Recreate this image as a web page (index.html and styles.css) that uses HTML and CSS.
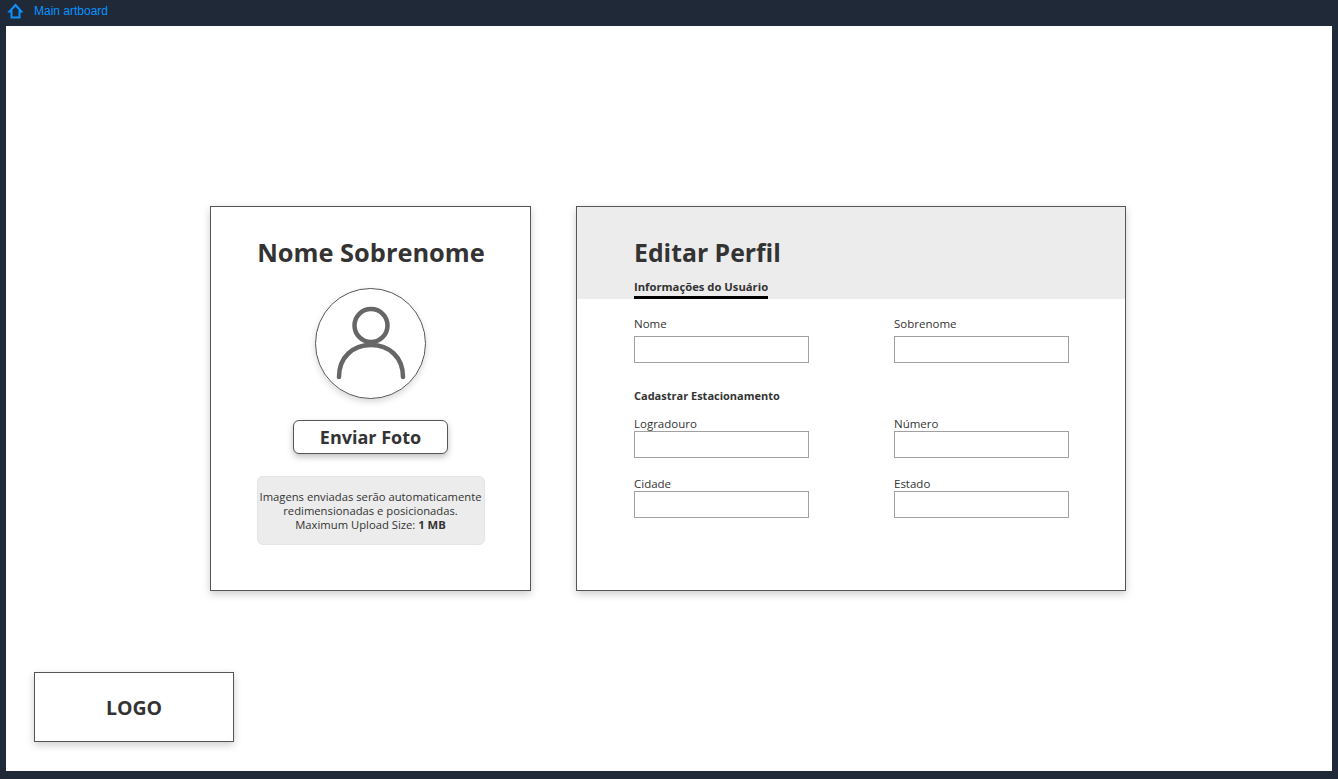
FILE: index.html
```html
<!DOCTYPE html>
<html lang="en">
<head>
    <meta charset="UTF-8">
    <meta name="viewport" content="width=device-width, initial-scale=1.0">
    <title>Main artboard</title>
    <link rel="stylesheet" href="styles.css">
</head>
<body>
    <div class="topbar">
        <svg class="home-icon" width="16" height="16" viewBox="0 0 16 16">
            <path d="M8.5 2 L14.5 8.5 H12.5 V14.5 H4.5 V8.5 H2.5 Z" fill="none" stroke="#0a93ff" stroke-width="2" stroke-linejoin="miter"/>
        </svg>
        <span class="topbar-title">Main artboard</span>
    </div>

    <div class="artboard">
        <div class="cards">
            <div class="card profile-card">
                <div class="profile-name">Nome Sobrenome</div>
                <div class="avatar">
                    <svg width="110" height="110" viewBox="0 0 110 110">
                        <circle cx="55" cy="36.5" r="16.5" fill="none" stroke="#666" stroke-width="4.5"/>
                        <path d="M23 88 C23 68 37 56 55 56 C73 56 87 68 87 88" fill="none" stroke="#666" stroke-width="4.5" stroke-linecap="round"/>
                    </svg>
                </div>
                <button class="upload-btn">Enviar Foto</button>
                <div class="upload-note">
                    Imagens enviadas serão automaticamente redimensionadas e posicionadas.<br>
                    Maximum Upload Size: <b>1 MB</b>
                </div>
            </div>

            <div class="card form-card">
                <div class="form-header">
                    <div class="form-title">Editar Perfil</div>
                    <div class="form-tab">Informações do Usuário</div>
                </div>
                <div class="form-body">
                    <div class="form-row">
                        <div class="field field-spaced">
                            <label for="nome">Nome</label>
                            <input type="text" id="nome">
                        </div>
                        <div class="field field-spaced">
                            <label for="sobrenome">Sobrenome</label>
                            <input type="text" id="sobrenome">
                        </div>
                    </div>
                    <div class="section-title">Cadastrar Estacionamento</div>
                    <div class="form-row">
                        <div class="field">
                            <label for="logradouro">Logradouro</label>
                            <input type="text" id="logradouro">
                        </div>
                        <div class="field">
                            <label for="numero">Número</label>
                            <input type="text" id="numero">
                        </div>
                    </div>
                    <div class="form-row">
                        <div class="field">
                            <label for="cidade">Cidade</label>
                            <input type="text" id="cidade">
                        </div>
                        <div class="field">
                            <label for="estado">Estado</label>
                            <input type="text" id="estado">
                        </div>
                    </div>
                </div>
            </div>
        </div>

        <div class="card logo-box">LOGO</div>
    </div>
</body>
</html>
```

FILE: styles.css
```css
* {
    box-sizing: border-box;
}

body {
    margin: 0;
    height: 779px;
    overflow: hidden;
    display: flex;
    flex-direction: column;
    padding: 0 6px 8px;
    background-color: #1f2937;
    font-family: "Open Sans", "Noto Sans", Arial, sans-serif;
    color: #333;
}

.topbar {
    height: 26px;
    flex-shrink: 0;
    display: flex;
    align-items: center;
    padding-bottom: 4px;
    padding-left: 1px;
}

.home-icon {
    display: block;
}

.topbar-title {
    margin-left: 11px;
    font-family: "Liberation Sans", Arial, sans-serif;
    font-size: 12px;
    color: #0a93ff;
}

.artboard {
    flex: 1;
    background-color: #fff;
    padding: 180px 0 0 28px;
}

.cards {
    display: flex;
    gap: 45px;
    margin-left: 176px;
    height: 385px;
}

.card {
    background-color: #fff;
    border: 1px solid #555;
    box-shadow: 0 3px 8px rgba(0, 0, 0, 0.2);
}

.profile-card {
    width: 321px;
    display: flex;
    flex-direction: column;
    align-items: center;
    padding-top: 26px;
}

.profile-name {
    padding-left: 1px;
    font-size: 25.4px;
    line-height: 38px;
    font-weight: 700;
    white-space: nowrap;
}

.avatar {
    width: 111px;
    height: 111px;
    margin-top: 17px;
    border: 1px solid #555;
    border-radius: 50%;
    box-shadow: 0 3px 6px rgba(0, 0, 0, 0.15);
}

.avatar svg {
    display: block;
}

.upload-btn {
    width: 155px;
    height: 34px;
    margin-top: 21px;
    padding: 0;
    background-color: #fff;
    border: 1px solid #555;
    border-radius: 6px;
    box-shadow: 0 3px 6px rgba(0, 0, 0, 0.25);
    font-family: inherit;
    font-size: 18px;
    font-weight: 700;
    color: #333;
}

.upload-note {
    width: 228px;
    height: 69px;
    margin-top: 22px;
    padding: 13px 0 0;
    background-color: #ececec;
    border: 1px solid #e4e4e4;
    border-radius: 6px;
    font-size: 11.25px;
    line-height: 14px;
    text-align: center;
}

.upload-note b {
    font-weight: 700;
}

.form-card {
    width: 550px;
}

.form-header {
    height: 92px;
    padding: 26px 0 0 57px;
    background-color: #ececec;
}

.form-title {
    font-size: 24.8px;
    line-height: 38px;
    font-weight: 700;
}

.form-tab {
    display: inline-block;
    height: 28px;
    padding-top: 9px;
    border-bottom: 3px solid #000;
    font-size: 11.25px;
    line-height: 14px;
    font-weight: 700;
}

.form-body {
    padding: 18px 0 0 57px;
}

.form-row {
    display: flex;
    gap: 85px;
    margin-bottom: 19px;
}

.field {
    width: 175px;
}

.field label {
    display: block;
    height: 14px;
    font-size: 11.5px;
    line-height: 14px;
}

.field input {
    display: block;
    width: 175px;
    height: 27px;
    padding: 0;
    background-color: #fff;
    border: 1px solid #a0a0a0;
    border-radius: 0;
}

.field-spaced label {
    height: 19px;
}

.section-title {
    margin-top: 26px;
    margin-bottom: 14px;
    font-size: 11px;
    line-height: 14px;
    font-weight: 700;
}

.logo-box {
    display: flex;
    align-items: center;
    justify-content: center;
    width: 200px;
    height: 70px;
    margin-top: 81px;
    font-size: 19.5px;
    font-weight: 700;
}
```
